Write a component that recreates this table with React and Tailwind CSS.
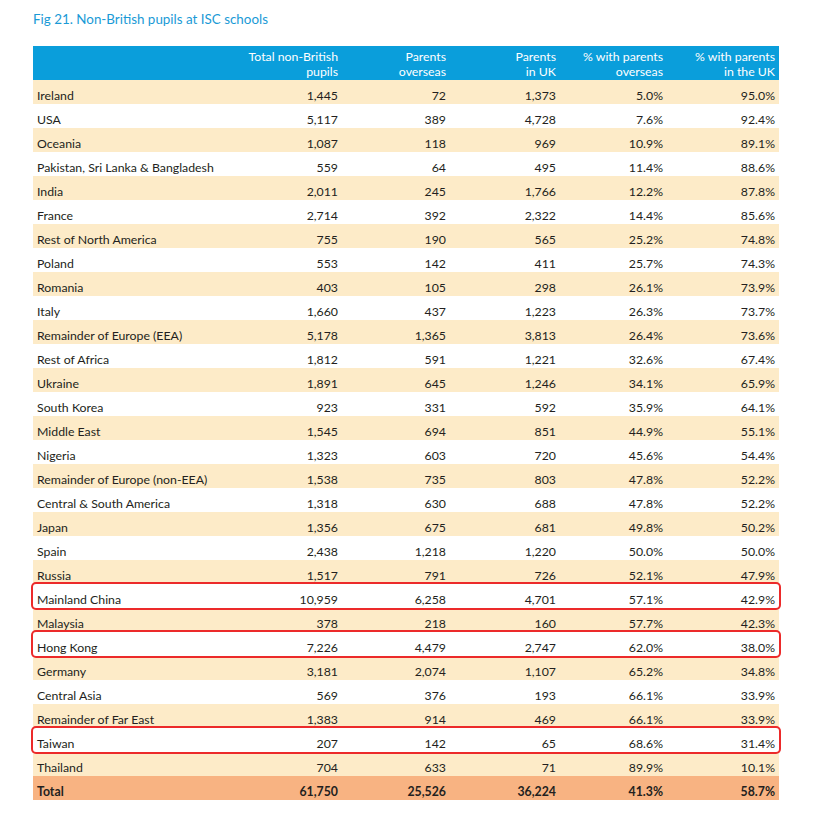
import React from "react";

const rows = [
  ["Ireland", "1,445", "72", "1,373", "5.0%", "95.0%"],
  ["USA", "5,117", "389", "4,728", "7.6%", "92.4%"],
  ["Oceania", "1,087", "118", "969", "10.9%", "89.1%"],
  ["Pakistan, Sri Lanka & Bangladesh", "559", "64", "495", "11.4%", "88.6%"],
  ["India", "2,011", "245", "1,766", "12.2%", "87.8%"],
  ["France", "2,714", "392", "2,322", "14.4%", "85.6%"],
  ["Rest of North America", "755", "190", "565", "25.2%", "74.8%"],
  ["Poland", "553", "142", "411", "25.7%", "74.3%"],
  ["Romania", "403", "105", "298", "26.1%", "73.9%"],
  ["Italy", "1,660", "437", "1,223", "26.3%", "73.7%"],
  ["Remainder of Europe (EEA)", "5,178", "1,365", "3,813", "26.4%", "73.6%"],
  ["Rest of Africa", "1,812", "591", "1,221", "32.6%", "67.4%"],
  ["Ukraine", "1,891", "645", "1,246", "34.1%", "65.9%"],
  ["South Korea", "923", "331", "592", "35.9%", "64.1%"],
  ["Middle East", "1,545", "694", "851", "44.9%", "55.1%"],
  ["Nigeria", "1,323", "603", "720", "45.6%", "54.4%"],
  ["Remainder of Europe (non-EEA)", "1,538", "735", "803", "47.8%", "52.2%"],
  ["Central & South America", "1,318", "630", "688", "47.8%", "52.2%"],
  ["Japan", "1,356", "675", "681", "49.8%", "50.2%"],
  ["Spain", "2,438", "1,218", "1,220", "50.0%", "50.0%"],
  ["Russia", "1,517", "791", "726", "52.1%", "47.9%"],
  ["Mainland China", "10,959", "6,258", "4,701", "57.1%", "42.9%"],
  ["Malaysia", "378", "218", "160", "57.7%", "42.3%"],
  ["Hong Kong", "7,226", "4,479", "2,747", "62.0%", "38.0%"],
  ["Germany", "3,181", "2,074", "1,107", "65.2%", "34.8%"],
  ["Central Asia", "569", "376", "193", "66.1%", "33.9%"],
  ["Remainder of Far East", "1,383", "914", "469", "66.1%", "33.9%"],
  ["Taiwan", "207", "142", "65", "68.6%", "31.4%"],
  ["Thailand", "704", "633", "71", "89.9%", "10.1%"],
];

const marked = ["Mainland China", "Hong Kong", "Taiwan"];

const cols = "grid grid-cols-[200px_109px_108px_110px_107px_112px]";

function Row({ cells, bg, extra }) {
  return (
    <div className={`${cols} h-[24px] items-center pt-[7px] ${bg} ${extra || ""}`}>
      <div className="pl-[4px] whitespace-nowrap">{cells[0]}</div>
      {cells.slice(1).map((c, i) => (
        <div key={i} className="text-right pr-[4px]">{c}</div>
      ))}
    </div>
  );
}

export default function App() {
  return (
    <div className="w-[814px] h-[815px] bg-white font-['Lato','Open_Sans',sans-serif] text-[#231f20] text-[12.3px]">
      <div className="pt-[10px] pl-[33px] text-[13.4px] text-[#1a9ad6] leading-[18px]">
        Fig 21. Non-British pupils at ISC schools
      </div>
      <div className="ml-[33px] mt-[18px] w-[746px]">
        <div className={`${cols} h-[34px] bg-[#0a9edb] text-white leading-[15px] items-center pt-[1px]`}>
          <div></div>
          <div className="text-right pr-[4px]">Total non-British<br />pupils</div>
          <div className="text-right pr-[4px]">Parents<br />overseas</div>
          <div className="text-right pr-[4px]">Parents<br />in UK</div>
          <div className="text-right pr-[4px]">% with parents<br />overseas</div>
          <div className="text-right pr-[4px]">% with parents<br />in the UK</div>
        </div>
        {rows.map((r, i) => {
          const hit = marked.includes(r[0]);
          const bg = hit ? "bg-white" : i % 2 === 0 ? "bg-[#fdebc8]" : "bg-white";
          return (
            <Row
              key={r[0]}
              cells={r}
              bg={bg}
              extra={hit ? "relative z-10 rounded-[3px] ring-2 ring-[#ec2a2a]" : ""}
            />
          );
        })}
        <Row
          cells={["Total", "61,750", "25,526", "36,224", "41.3%", "58.7%"]}
          bg="bg-[#f8b382] font-bold"
        />
      </div>
    </div>
  );
}
